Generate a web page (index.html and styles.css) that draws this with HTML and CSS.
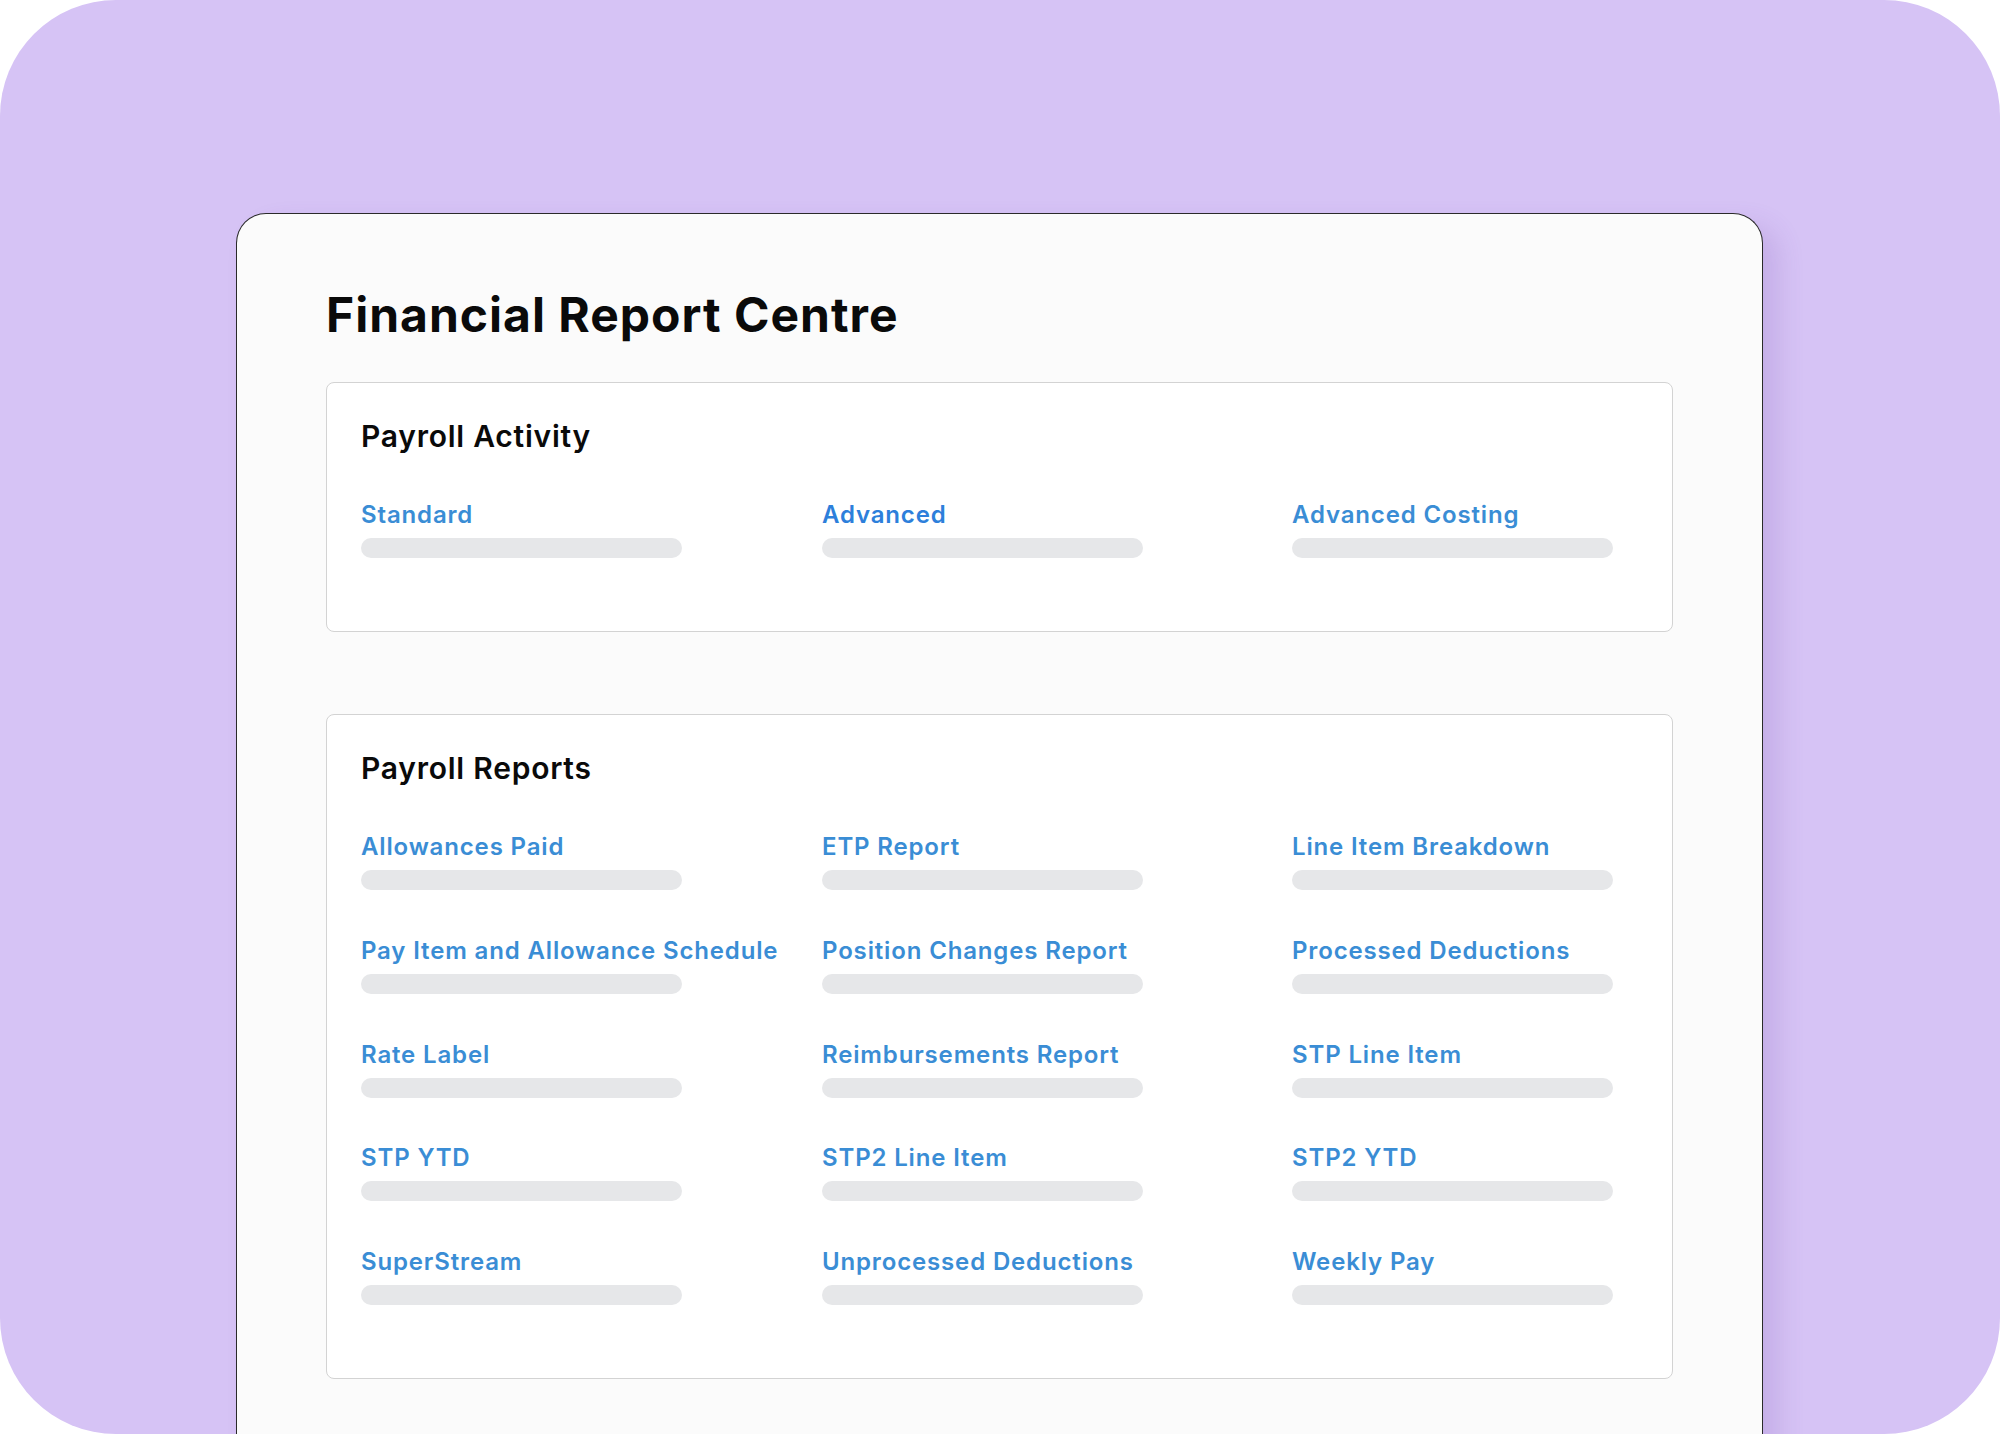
FILE: index.html
```html
<!DOCTYPE html>
<html lang="en">

<head>
  <meta charset="UTF-8">
  <meta name="viewport" content="width=device-width, initial-scale=1.0">
  <title>Financial Report Centre</title>
  <link rel="stylesheet" href="styles.css">
</head>

<body>
  <div class="moldura">
    <div class="janela">
      <h1 class="titulo">Financial Report Centre</h1>

      <!-- Bloco de atividade da folha -->
      <section class="cartao">
        <h2>Payroll Activity</h2>
        <div class="grade">
          <div class="item"><a href="#">Standard</a><span class="barra"></span></div>
          <div class="item"><a href="#" class="ativo">Advanced</a><span class="barra"></span></div>
          <div class="item"><a href="#">Advanced Costing</a><span class="barra"></span></div>
        </div>
      </section>

      <!-- Bloco com todos os relatórios -->
      <section class="cartao">
        <h2>Payroll Reports</h2>
        <div class="grade">
          <div class="item"><a href="#">Allowances Paid</a><span class="barra"></span></div>
          <div class="item"><a href="#">ETP Report</a><span class="barra"></span></div>
          <div class="item"><a href="#">Line Item Breakdown</a><span class="barra"></span></div>

          <div class="item"><a href="#">Pay Item and Allowance Schedule</a><span class="barra"></span></div>
          <div class="item"><a href="#">Position Changes Report</a><span class="barra"></span></div>
          <div class="item"><a href="#">Processed Deductions</a><span class="barra"></span></div>

          <div class="item"><a href="#">Rate Label</a><span class="barra"></span></div>
          <div class="item"><a href="#">Reimbursements Report</a><span class="barra"></span></div>
          <div class="item"><a href="#">STP Line Item</a><span class="barra"></span></div>

          <div class="item"><a href="#">STP YTD</a><span class="barra"></span></div>
          <div class="item"><a href="#">STP2 Line Item</a><span class="barra"></span></div>
          <div class="item"><a href="#">STP2 YTD</a><span class="barra"></span></div>

          <div class="item"><a href="#">SuperStream</a><span class="barra"></span></div>
          <div class="item"><a href="#">Unprocessed Deductions</a><span class="barra"></span></div>
          <div class="item"><a href="#">Weekly Pay</a><span class="barra"></span></div>
        </div>
      </section>
    </div>
  </div>
</body>

</html>
```

FILE: styles.css
```css
/* Estilo geral da página */
body {
  margin: 0;
  background: #ffffff;
  font-family: Inter, "Noto Sans", Arial, sans-serif;
  overflow: hidden;
}

/* Fundo lilás com cantos bem arredondados */
.moldura {
  width: 2000px;
  height: 1434px;
  box-sizing: border-box;
  padding: 213px 0 0 236px;
  background: #d6c3f5;
  border-radius: 116px;
  overflow: hidden;
}

/* Janela branca que sai pela parte de baixo */
.janela {
  width: 1527px;
  height: 1300px;
  box-sizing: border-box;
  padding: 72px 89px 0 89px;
  background: #fbfbfb;
  border: 1.5px solid #2a2a2a;
  border-bottom: none;
  border-radius: 30px 30px 0 0;
  box-shadow: 16px 12px 26px rgba(110, 70, 170, 0.16);
}

.titulo {
  margin: 0 0 38px 0;
  font-size: 48px;
  font-weight: 700;
  line-height: 58px;
  color: #0a0a0a;
  letter-spacing: 1px;
}

/* Cartões de cada grupo de relatórios */
.cartao {
  background: #ffffff;
  border: 1.5px solid #d3d3d3;
  border-radius: 8px;
  padding: 35px 33px 73px 34px;
  margin-bottom: 82px;
}

.cartao h2 {
  margin: 0 0 46px 0;
  font-size: 30px;
  font-weight: 600;
  line-height: 36px;
  color: #0a0a0a;
  letter-spacing: 0.75px;
}

.grade {
  display: grid;
  grid-template-columns: 461px 470px 1fr;
  row-gap: 45.75px;
}

.item {
  display: flex;
  flex-direction: column;
  align-items: flex-start;
  gap: 9px;
}

.item a {
  font-size: 24px;
  font-weight: 600;
  line-height: 29px;
  color: #3a8dd5;
  text-decoration: none;
  letter-spacing: 0.85px;
  white-space: nowrap;
}

.item a.ativo {
  color: #2d7fdb;
}

/* Barrinha cinza de carregamento embaixo de cada link */
.barra {
  display: block;
  width: 321px;
  height: 20px;
  border-radius: 10px;
  background: #e6e7e9;
}
```
